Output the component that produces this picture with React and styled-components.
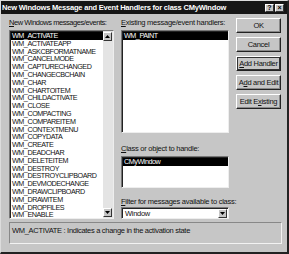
import React from 'react'
import styled, { createGlobalStyle } from 'styled-components'

const Global = createGlobalStyle`
  body { margin: 0; background: #c6c6c6; }
  * { box-sizing: border-box; }
`

const messages = [
  'WM_ACTIVATE', 'WM_ACTIVATEAPP', 'WM_ASKCBFORMATNAME', 'WM_CANCELMODE',
  'WM_CAPTURECHANGED', 'WM_CHANGECBCHAIN', 'WM_CHAR', 'WM_CHARTOITEM',
  'WM_CHILDACTIVATE', 'WM_CLOSE', 'WM_COMPACTING', 'WM_COMPAREITEM',
  'WM_CONTEXTMENU', 'WM_COPYDATA', 'WM_CREATE', 'WM_DEADCHAR',
  'WM_DELETEITEM', 'WM_DESTROY', 'WM_DESTROYCLIPBOARD', 'WM_DEVMODECHANGE',
  'WM_DRAWCLIPBOARD', 'WM_DRAWITEM', 'WM_DROPFILES', 'WM_ENABLE'
]

const Dialog = styled.div`
  width: 289px;
  height: 254px;
  background: #c6c6c6;
  border: 1px solid #dcdcdc;
  border-right: 2px solid #222;
  border-bottom: 2px solid #222;
  font-family: "Liberation Sans", Arial, sans-serif;
  font-size: 7.5px;
  letter-spacing: -0.3px;
  color: #111;
  display: flex;
  flex-direction: column;
  overflow: hidden;
`

const TitleBar = styled.div`
  height: 13px;
  background: #161616;
  color: #fff;
  font-weight: bold;
  font-size: 7.5px;
  letter-spacing: -0.2px;
  display: flex;
  align-items: center;
  padding: 0 3px 0 1px;
  white-space: nowrap;
`

const TitleText = styled.span`
  flex: 1;
`

const CapButton = styled.span`
  width: 9px;
  height: 8px;
  margin-left: ${p => (p.gap ? '1px' : '0')};
  background: #c6c6c6;
  color: #000;
  border: 1px solid #fff;
  border-right-color: #333;
  border-bottom-color: #333;
  font-size: 7px;
  font-weight: bold;
  letter-spacing: 0;
  display: flex;
  align-items: center;
  justify-content: center;
  line-height: 1;
`

const Body = styled.div`
  display: grid;
  grid-template-columns: 105px 108px 45px;
  column-gap: 7px;
  padding: 3px 0 0 8px;
`

const Column = styled.div`
  display: flex;
  flex-direction: column;
`

const Label = styled.div`
  height: ${p => p.h || 13}px;
  line-height: 12px;
  margin-top: ${p => p.top || 0}px;
  white-space: nowrap;
  letter-spacing: ${p => (p.tight ? '-0.45px' : '-0.25px')};
  u { text-decoration: underline; }
`

const ListBox = styled.div`
  height: ${p => p.h}px;
  background: #fff;
  border: 1px solid #777;
  border-right-color: #eee;
  border-bottom-color: #eee;
  box-shadow: inset 1px 1px 0 #222;
  display: flex;
  overflow: hidden;
`

const Items = styled.div`
  flex: 1;
  padding: 1px 0 0 1px;
  min-width: 0;
`

const Item = styled.div`
  height: 7.8px;
  line-height: 8px;
  padding-left: 1px;
  font-size: 7.2px;
  letter-spacing: -0.45px;
  white-space: nowrap;
  background: ${p => (p.selected ? '#000' : 'transparent')};
  color: ${p => (p.selected ? '#fff' : '#111')};
`

const ScrollBar = styled.div`
  width: 10px;
  background: #e4e4e4;
  display: flex;
  flex-direction: column;
  justify-content: space-between;
  padding: 1px 0 1px 0;
`

const Arrow = styled.div`
  width: 9px;
  height: 9px;
  background: #c6c6c6;
  border: 1px solid #fff;
  border-right-color: #333;
  border-bottom-color: #333;
  display: flex;
  align-items: center;
  justify-content: center;
`

const Combo = styled.div`
  height: 12px;
  background: #fff;
  border: 1px solid #777;
  border-right-color: #eee;
  border-bottom-color: #eee;
  box-shadow: inset 1px 1px 0 #222;
  display: flex;
  align-items: center;
  padding: 0 1px 0 3px;
`

const ComboText = styled.span`
  flex: 1;
`

const Buttons = styled.div`
  display: flex;
  flex-direction: column;
  gap: 4px;
  padding-top: 1px;
`

const Button = styled.div`
  height: 15px;
  background: #c6c6c6;
  border: 1px solid #fff;
  border-right-color: #222;
  border-bottom-color: #222;
  box-shadow: ${p => (p.focus ? 'inset 0 0 0 1px #333' : 'inset -1px -1px 0 #888')};
  display: flex;
  align-items: center;
  justify-content: center;
  white-space: nowrap;
`

const Status = styled.div`
  margin: 3px 5px 0 8px;
  height: 22px;
  border: 1px solid #888;
  border-right-color: #f2f2f2;
  border-bottom-color: #f2f2f2;
  padding: 3px 0 0 2px;
  white-space: nowrap;
`

const Tri = ({ down }) => (
  <svg width="5" height="3" viewBox="0 0 5 3">
    <path d={down ? 'M0 0h5L2.5 3z' : 'M0 3h5L2.5 0z'} fill="#000" />
  </svg>
)

export default function App() {
  return (
    <>
      <Global />
      <Dialog>
        <TitleBar>
          <TitleText>New Windows Message and Event Handlers for class CMyWindow</TitleText>
          <CapButton>?</CapButton>
          <CapButton gap>×</CapButton>
        </TitleBar>
        <Body>
          <Column>
            <Label tight><u>N</u>ew Windows messages/events:</Label>
            <ListBox h={189}>
              <Items>
                {messages.map((m, i) => (
                  <Item key={m} selected={i === 0}>{m}</Item>
                ))}
              </Items>
              <ScrollBar>
                <Arrow><Tri /></Arrow>
                <Arrow><Tri down /></Arrow>
              </ScrollBar>
            </ListBox>
          </Column>
          <Column>
            <Label><u>E</u>xisting message/event handlers:</Label>
            <ListBox h={103}>
              <Items>
                <Item selected>WM_PAINT</Item>
              </Items>
            </ListBox>
            <Label top={10}><u>C</u>lass or object to handle:</Label>
            <ListBox h={32}>
              <Items>
                <Item selected>CMyWindow</Item>
              </Items>
            </ListBox>
            <Label top={8} h={11}><u>F</u>ilter for messages available to class:</Label>
            <Combo>
              <ComboText>Window</ComboText>
              <Arrow><Tri down /></Arrow>
            </Combo>
          </Column>
          <Buttons>
            <Button>OK</Button>
            <Button>Cancel</Button>
            <Button focus><span><u>A</u>dd Handler</span></Button>
            <Button><span>A<u>d</u>d and Edit</span></Button>
            <Button><span>Edit E<u>x</u>isting</span></Button>
          </Buttons>
        </Body>
        <Status>WM_ACTIVATE : Indicates a change in the activation state</Status>
      </Dialog>
    </>
  )
}
